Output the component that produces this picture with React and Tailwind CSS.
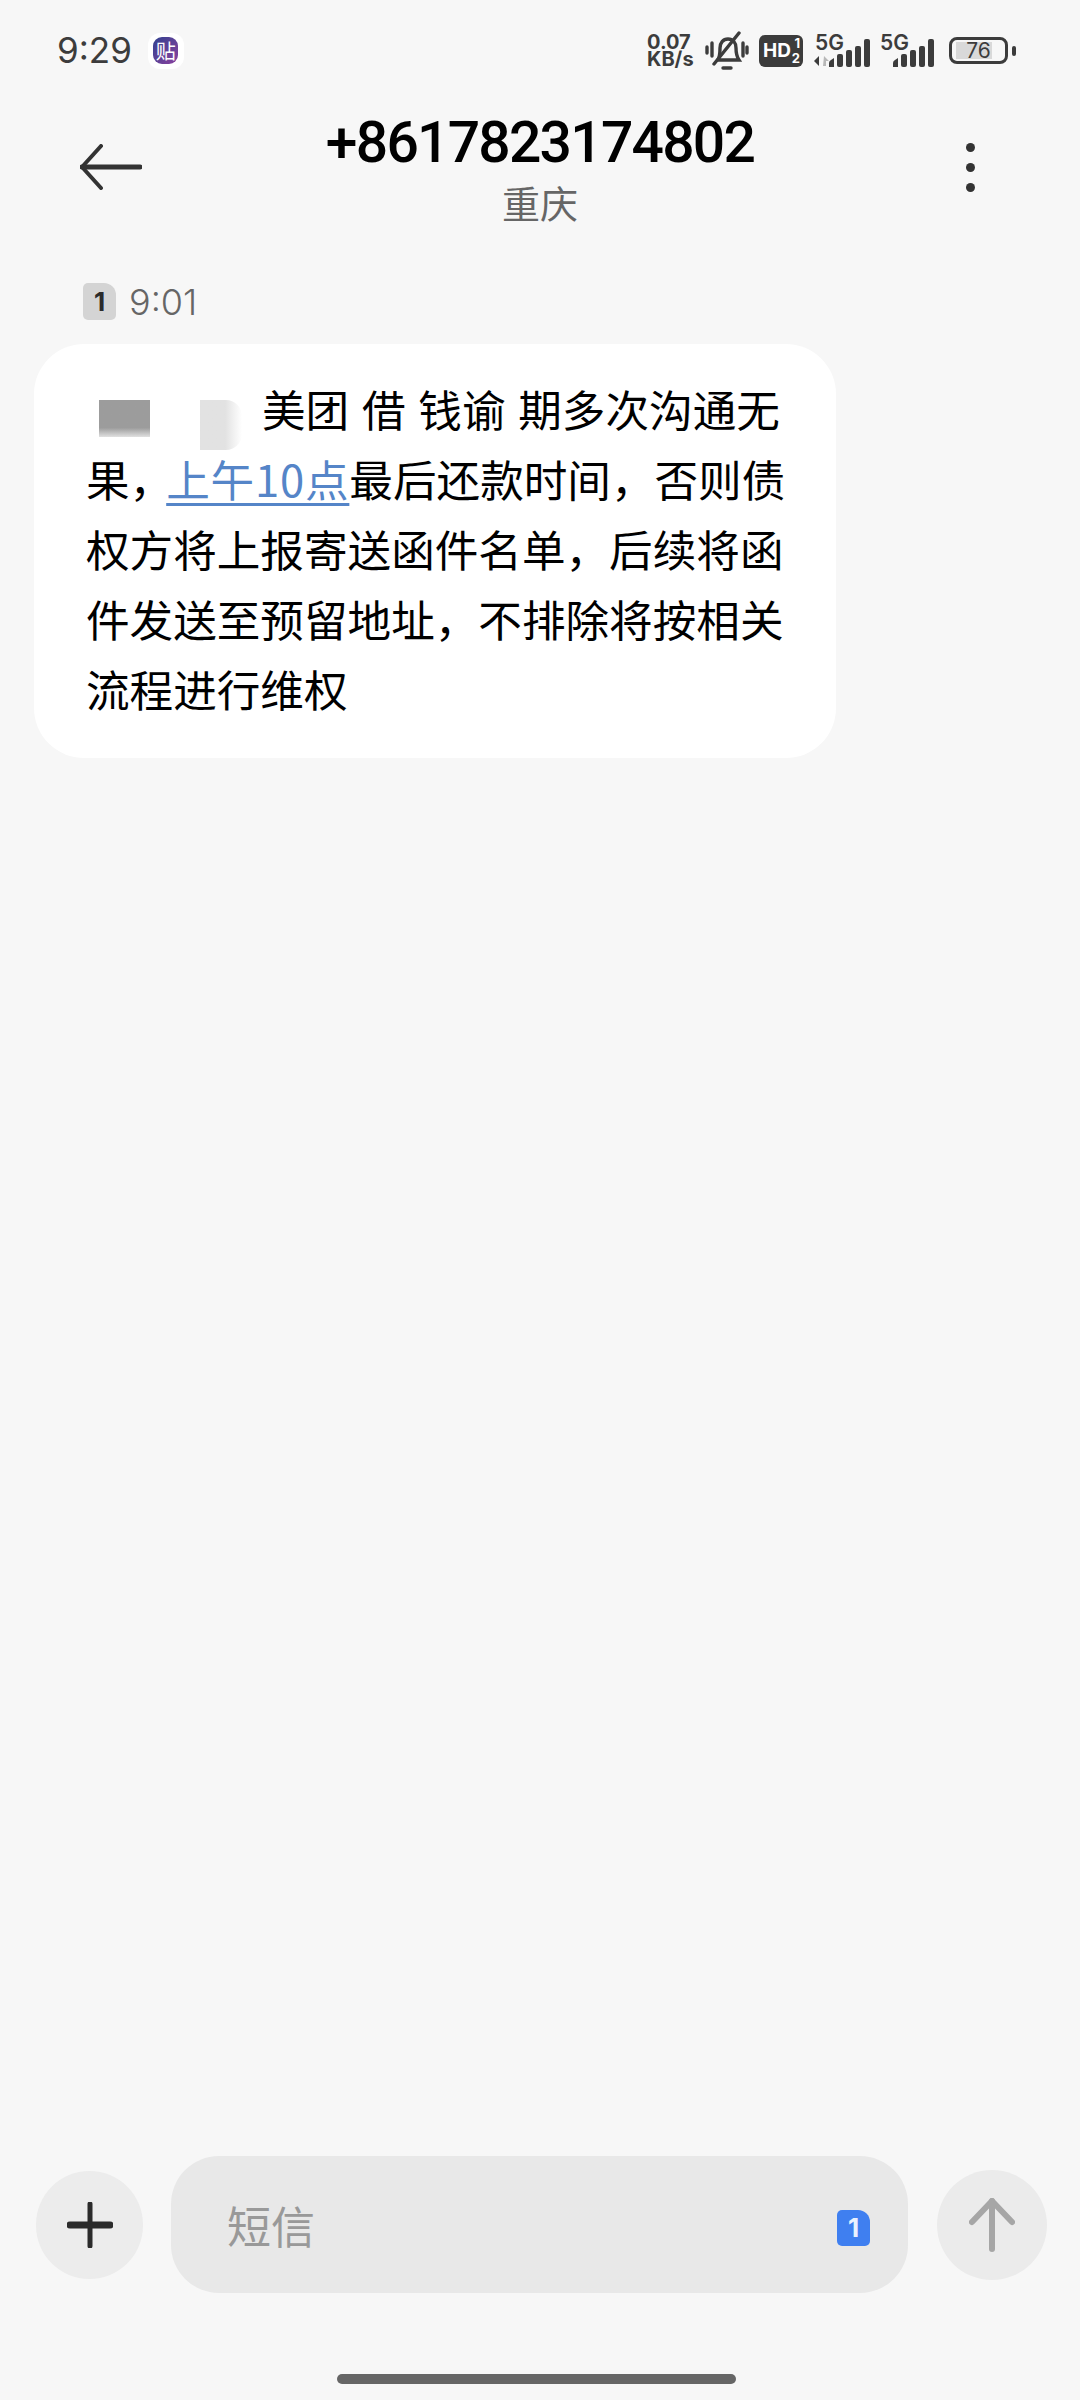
import React from "react";

const cjk = '"Noto Sans CJK SC", sans-serif';

// status bar signal bars, drawn the same for both SIMs
const Bars = () => (
  <svg width="44" height="28" viewBox="0 0 44 28" className="block">
    <path d="M1 28v-4q0-2 2-3l3-2v9z" fill="#3c3c3c" />
    <rect x="9" y="15" width="6" height="13" rx="2" fill="#3c3c3c" />
    <rect x="18" y="11" width="6" height="17" rx="2" fill="#3c3c3c" />
    <rect x="27" y="7" width="6" height="21" rx="2" fill="#3c3c3c" />
    <rect x="36" y="0" width="6" height="28" rx="2" fill="#3c3c3c" />
  </svg>
);

const SimBadge = ({ className }) => (
  <div
    className={`flex items-center justify-center rounded-[5px] rounded-tr-[12px] font-bold ${className}`}
    style={{ fontFamily: "Inter, sans-serif" }}
  >
    1
  </div>
);

const StatusBar = () => (
  <div className="mt-[25px] flex h-[88px] shrink-0 items-center justify-between pb-[38px] pl-[57px] pr-[64px] pt-[1px] text-[#3c3c3c]" style={{ fontFamily: "Inter, sans-serif" }}>
    <div className="flex items-center gap-[16px]">
      <span className="text-[35px] leading-none">9:29</span>
      <div className="flex h-[36px] w-[36px] items-center justify-center rounded-[12px] bg-white">
        <div
          className="flex h-[27px] w-[25px] items-center justify-center rounded-[9px] bg-gradient-to-br from-[#2c3f8f] to-[#8a3f9e] text-[20px] leading-none text-white"
          style={{ fontFamily: cjk }}
        >
          贴
        </div>
      </div>
    </div>
    <div className="flex items-center">
      <div className="w-[50px] text-[20px] font-bold leading-[17px]">
        <div>0.07</div>
        <div>KB/s</div>
      </div>
      <svg width="44" height="40" viewBox="0 0 44 40" fill="none" stroke="#3c3c3c" strokeWidth="3.4" strokeLinecap="round" className="ml-[8px]">
        <path d="M13 29c2-4 2-8 2-12 0-5 3-9 8-9s8 4 8 9c0 5 1 9 3 12z" />
        <path d="M34 2 9 33" />
        <path d="M18 37h8" />
        <path d="M2 16v6M7 12v13M38 12v13M42 16v6" />
      </svg>
      <div className="relative ml-[10px] h-[32px] w-[44px] rounded-[6px] bg-[#3c3c3c] text-white">
        <span className="absolute left-[4px] top-[6px] text-[19px] font-bold leading-[20px]">HD</span>
        <span className="absolute right-[3px] top-[1px] text-[13px] font-bold leading-[15px]">1</span>
        <span className="absolute right-[3px] top-[16px] text-[13px] font-bold leading-[15px]">2</span>
      </div>
      <div className="relative ml-[11px] h-[32px] w-[57px]">
        <span className="absolute left-[1px] top-[-1px] text-[21px] font-semibold leading-[18px]">5G</span>
        <svg width="16" height="10" viewBox="0 0 16 10" className="absolute bottom-[1px] left-0">
          <path d="M5 0v10L0 5z" fill="#3c3c3c" />
          <path d="M10 0l5 5h-3v5h-3z" fill="#b8b8b8" />
        </svg>
        <div className="absolute bottom-0 right-[-1px]">
          <Bars />
        </div>
      </div>
      <div className="relative ml-[8px] h-[32px] w-[57px]">
        <span className="absolute left-[1px] top-[-1px] text-[21px] font-semibold leading-[18px]">5G</span>
        <div className="absolute bottom-0 right-0">
          <Bars />
        </div>
      </div>
      <div className="relative ml-[13px] flex h-[27px] w-[59px] items-center justify-center overflow-hidden rounded-[8px] border-[3px] border-[#3c3c3c]">
        <div className="absolute inset-y-[2px] left-[4px] w-[36px] bg-[#d9d9d9]" />
        <span className="relative text-[21px] leading-none">76</span>
      </div>
      <div className="ml-[4px] h-[10px] w-[4px] rounded-full bg-[#3c3c3c]" />
    </div>
  </div>
);

const Header = () => (
  <div className="grid shrink-0 grid-cols-[1fr_auto_1fr] items-start px-[80px]">
    <svg width="62" height="46" viewBox="0 0 62 46" fill="none" stroke="#333" strokeWidth="4" strokeLinecap="round" strokeLinejoin="round" className="mt-[31px]">
      <path d="M21 2 2 23l19 21" />
      <path d="M2 23h58" strokeWidth="5" />
    </svg>
    <div className="flex flex-col items-center">
      <div className="text-[57px] font-medium leading-[60px] tracking-[-1.75px] text-black" style={{ fontFamily: "Roboto, sans-serif" }}>
        +8617823174802
      </div>
      <div className="mt-[7px] text-[38px] leading-[44px] text-[#666]" style={{ fontFamily: cjk }}>
        重庆
      </div>
    </div>
    <div className="mr-[25px] mt-[30px] flex flex-col items-end gap-[11px]">
      <div className="h-[9px] w-[9px] rounded-full bg-[#333]" />
      <div className="h-[9px] w-[9px] rounded-full bg-[#333]" />
      <div className="h-[9px] w-[9px] rounded-full bg-[#333]" />
    </div>
  </div>
);

const Bubble = () => (
  <div className="relative ml-[34px] mt-[24px] w-[802px] rounded-[50px] bg-white pb-[35px] pl-[52px] pr-[44px] pt-[29px]">
    {/* the two blurred patches hiding the name at the start of the message */}
    <div className="absolute left-[65px] top-[56px] h-[37px] w-[51px] bg-gradient-to-b from-[#9c9c9c] from-75% to-[#e0e0e0]" />
    <div className="absolute left-[166px] top-[56px] h-[50px] w-[42px] rounded-r-[16px] bg-gradient-to-r from-[#e2e2e2] from-60% to-white" />
    <div className="whitespace-nowrap text-[43.6px] leading-[70px] text-black [word-spacing:3px]" style={{ fontFamily: cjk }}>
      <div className="pl-[176px]">美团 借 钱谕 期多次沟通无</div>
      <div>
        果，
        <span className="-ml-[7px] tracking-[0.8px] text-[#5585c8] underline decoration-[3px] underline-offset-[6px]">上午10点</span>
        最后还款时间，否则债
      </div>
      <div>权方将上报寄送函件名单，后续将函</div>
      <div>件发送至预留地址，不排除将按相关</div>
      <div>流程进行维权</div>
    </div>
  </div>
);

const Composer = () => (
  <div className="flex shrink-0 items-center pl-[36px] pr-[33px]">
    <div className="flex h-[108px] w-[107px] shrink-0 items-center justify-center rounded-full bg-[#ececec]">
      <svg width="46" height="46" viewBox="0 0 46 46" fill="none" stroke="#2b2b2b" strokeLinecap="round">
        <path d="M23 2v42" strokeWidth="5" />
        <path d="M3 23h40" strokeWidth="7" />
      </svg>
    </div>
    <div className="ml-[28px] flex h-[137px] flex-1 items-center justify-between rounded-[48px] bg-[#e8e8e8] pl-[56px] pr-[38px]">
      <span className="text-[44px] leading-none text-[#999]" style={{ fontFamily: cjk }}>
        短信
      </span>
      <SimBadge className="mt-[6px] h-[36px] w-[33px] bg-[#3f7ff0] text-[26px] leading-none text-[#eaf1ff]" />
    </div>
    <div className="ml-[29px] flex h-[110px] w-[110px] shrink-0 items-center justify-center rounded-full bg-[#ebebeb]">
      <svg width="46" height="54" viewBox="0 0 46 54" fill="none" stroke="#a6a6a6" strokeWidth="6" strokeLinecap="round" strokeLinejoin="round">
        <path d="M3 24 23 3l20 21" />
        <path d="M23 3v48" />
      </svg>
    </div>
  </div>
);

export default function App() {
  return (
    <div className="flex h-[2400px] w-[1080px] flex-col overflow-hidden bg-[#f7f7f7]">
      <StatusBar />
      <Header />
      <div className="ml-[83px] mt-[59px] flex items-center gap-[13px]">
        <SimBadge className="h-[37px] w-[33px] bg-[#d4d4d4] text-[26px] leading-none text-[#2b2b2b]" />
        <span className="text-[36px] font-light leading-none text-[#666]" style={{ fontFamily: "Inter, sans-serif" }}>
          9:01
        </span>
      </div>
      <Bubble />
      <div className="flex-1" />
      <Composer />
      <div className="flex h-[107px] shrink-0 justify-center pr-[8px] pt-[81px]">
        <div className="h-[10px] w-[399px] rounded-full bg-[#666]" />
      </div>
    </div>
  );
}
